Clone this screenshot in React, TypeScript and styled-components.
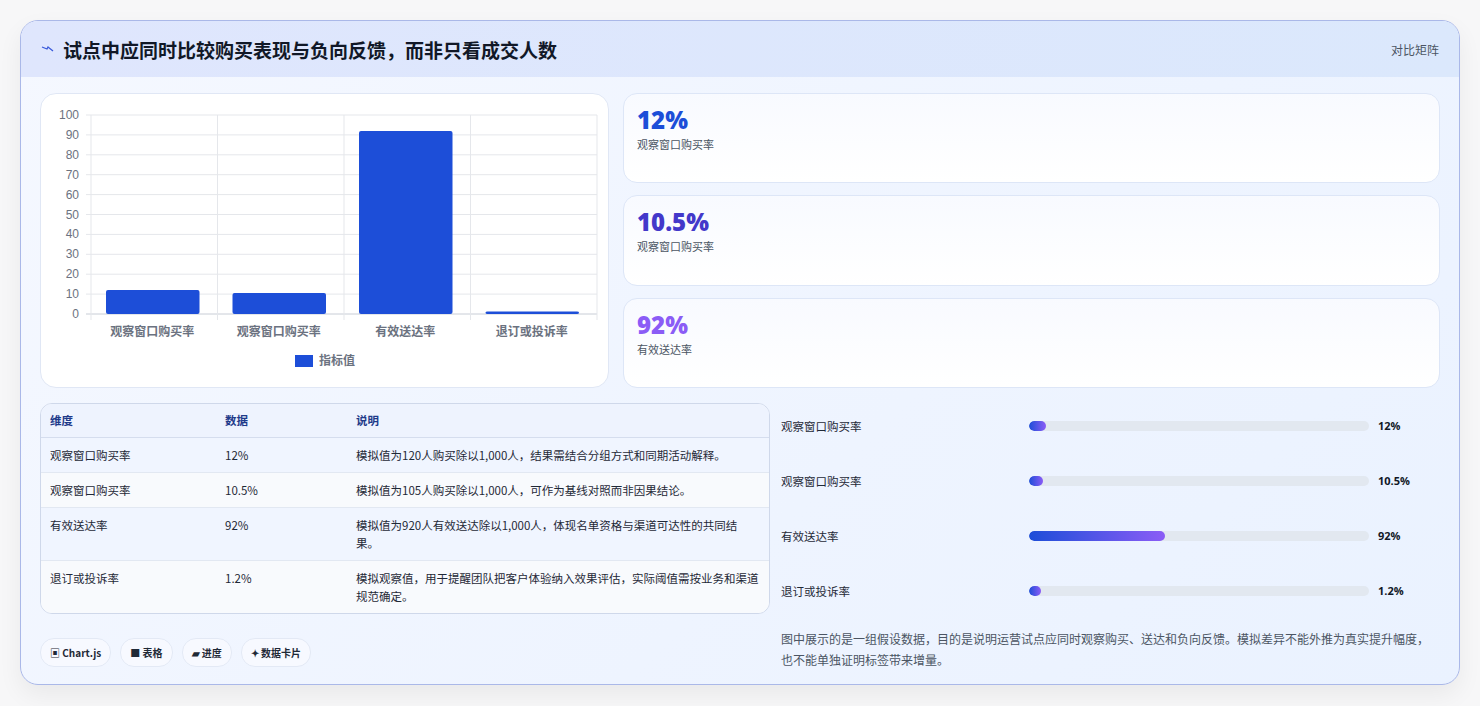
import React from "react";
import styled, { createGlobalStyle } from "styled-components";

const Global = createGlobalStyle`
  html, body { margin: 0; padding: 0; background: #f7f7f8; }
  body { font-family: "Noto Sans", "Noto Sans CJK SC", sans-serif; }
  * { box-sizing: border-box; }
`;

const Page = styled.div`
  padding: 20px;
  height: 706px;
`;
const Card = styled.div`
  width: 1440px;
  height: 665px;
  border: 1px solid #aab8e8;
  border-radius: 18px;
  background: linear-gradient(135deg, #f5f8ff 0%, #eef4ff 60%, #eaf2ff 100%);
  box-shadow: 0 10px 24px rgba(0,0,0,0.06);
  overflow: hidden;
  display: flex;
  flex-direction: column;
`;
const Header = styled.div`
  height: 56px;
  display: flex;
  align-items: center;
  justify-content: space-between;
  padding: 0 20px;
  background: linear-gradient(90deg, #dfe6fd, #dbe8fc);
`;
const Title = styled.h1`
  margin: 0;
  font-size: 19px;
  font-weight: 700;
  color: #111827;
  display: flex;
  align-items: center;
  gap: 8px;
  font-family: "Noto Sans CJK SC", sans-serif;
`;
const Tag = styled.span`
  font-size: 12px;
  color: #4b5563;
  font-family: "Noto Sans CJK SC", sans-serif;
`;
const Body = styled.div`
  padding: 16px 19px 0 19px;
  display: flex;
  flex-direction: column;
  gap: 15px;
`;
const Row = styled.div<{ $h?: number }>`
  display: flex;
  gap: ${p => (p.$h ? 14 : 11)}px;
  ${p => (p.$h ? `height: ${p.$h}px;` : "")}
`;
const ChartCard = styled.div`
  width: 569px;
  flex: none;
  background: #fff;
  border: 1px solid #e0e7f5;
  border-radius: 16px;
`;
const Stats = styled.div`
  flex: 1;
  display: flex;
  flex-direction: column;
  gap: 12px;
`;
const Stat = styled.div`
  flex: 1;
  background: linear-gradient(180deg, #f8faff, #ffffff);
  border: 1px solid #dde6f7;
  border-radius: 14px;
  padding: 11px 13px;
`;
const StatValue = styled.div<{ $c: string }>`
  font-size: 24px;
  font-weight: 800;
  line-height: 30px;
  color: ${p => p.$c};
  font-family: "Open Sans", "Noto Sans", sans-serif;
`;
const StatLabel = styled.div`
  font-size: 11px;
  color: #4b5563;
  margin-top: 1px;
  font-family: "Noto Sans CJK SC", sans-serif;
`;
const LeftBottom = styled.div`
  display: flex;
  flex-direction: column;
  width: 730px;
  flex: none;
`;
const TableWrap = styled.div`
  border: 1px solid #cfd8ea;
  border-radius: 12px;
  overflow: hidden;
  background: #f8faff;
`;
const Table = styled.table`
  width: 100%;
  border-collapse: collapse;
  font-size: 11.5px;
  font-family: "Noto Sans CJK SC", sans-serif;
  color: #1f2937;
  th { text-align: left; font-weight: 700; color: #1e3a8a; background: #eef3fe; padding: 8px 9px; height: 33px; border-bottom: 1px solid #d5ddee; }
  td { padding: 8px 9px; vertical-align: top; line-height: 18px; border-bottom: 1px solid #e2e8f2; }
  tr:nth-child(odd) td { background: #f0f5ff; }
  tr:nth-child(even) td { background: #f8fafd; }
  tr:last-child td { border-bottom: none; }
`;
const Chips = styled.div`
  display: flex;
  gap: 9px;
  margin-top: 24px;
`;
const Chip = styled.span`
  font-size: 10px;
  font-weight: 600;
  color: #1f2937;
  background: #f7f9ff;
  border: 1px solid #e3e9f5;
  border-radius: 14px;
  padding: 6px 9px;
  font-family: "Noto Sans CJK SC", sans-serif;
`;
const RightBottom = styled.div`
  flex: 1;
  display: flex;
  flex-direction: column;
`;
const BarRow = styled.div`
  display: grid;
  grid-template-columns: 248px 340px 1fr;
  align-items: center;
  height: 55px;
  font-family: "Noto Sans CJK SC", sans-serif;
  &:first-child { margin-top: -5px; }
`;
const BarLabel = styled.span`
  font-size: 11.5px;
  color: #1f2937;
`;
const Track = styled.div`
  height: 10px;
  background: #e2e8f0;
  border-radius: 5px;
  overflow: hidden;
`;
const Fill = styled.div`
  height: 100%;
  border-radius: 5px;
  background: linear-gradient(90deg, #1d4ed8, #8b5cf6);
`;
const BarVal = styled.span`
  font-size: 11px;
  font-weight: 700;
  color: #111827;
  padding-left: 9px;
  font-family: "Open Sans", sans-serif;
`;
const Note = styled.p`
  margin: 10px 0 0;
  font-size: 12px;
  line-height: 21px;
  color: #4b5563;
  font-family: "Noto Sans CJK SC", sans-serif;
`;

const cats = ["观察窗口购买率", "观察窗口购买率", "有效送达率", "退订或投诉率"];
const vals = [12, 10.5, 92, 1.2];

function Chart() {
  const x0 = 50, x1 = 556, yTop = 21, yBot = 220;
  const cw = (x1 - x0) / 4;
  const ticks = [0, 10, 20, 30, 40, 50, 60, 70, 80, 90, 100];
  const y = (v: number) => yBot - (v / 100) * (yBot - yTop);
  return (
    <svg width="569" height="295" style={{ display: "block" }} fontFamily="Liberation Sans, Noto Sans CJK SC, sans-serif">
      {ticks.map(t => (
        <g key={t}>
          <line x1={x0 - 5} x2={x1} y1={y(t)} y2={y(t)} stroke={t === 0 ? "#c8cdd6" : "#e5e7eb"} />
          <text x={x0 - 12} y={y(t) + 4} fontSize="12" fill="#6b7280" textAnchor="end">{t}</text>
        </g>
      ))}
      {[0, 1, 2, 3, 4].map(i => (
        <line key={i} x1={x0 + i * cw} x2={x0 + i * cw} y1={yTop} y2={yBot + 6} stroke="#e5e7eb" />
      ))}
      {vals.map((v, i) => (
        <rect key={i} x={x0 + i * cw + 15} width={cw - 33} y={y(v)} height={yBot - y(v)} rx="2" fill="#1d4ed8" />
      ))}
      {cats.map((c, i) => (
        <text key={i} x={x0 + i * cw + cw / 2 - 2} y={242} fontSize="12" fontWeight="600" fill="#6b7280" textAnchor="middle">{c}</text>
      ))}
      <rect x={254} y={261} width={18} height={12} fill="#1d4ed8" />
      <text x={278} y={271} fontSize="12" fontWeight="600" fill="#6b7280">指标值</text>
    </svg>
  );
}

const rows = [
  ["观察窗口购买率", "12%", "模拟值为120人购买除以1,000人，结果需结合分组方式和同期活动解释。"],
  ["观察窗口购买率", "10.5%", "模拟值为105人购买除以1,000人，可作为基线对照而非因果结论。"],
  ["有效送达率", "92%", "模拟值为920人有效送达除以1,000人，体现名单资格与渠道可达性的共同结果。"],
  ["退订或投诉率", "1.2%", "模拟观察值，用于提醒团队把客户体验纳入效果评估，实际阈值需按业务和渠道规范确定。"],
];
const bars: [string, string, number][] = [
  ["观察窗口购买率", "12%", 17],
  ["观察窗口购买率", "10.5%", 14],
  ["有效送达率", "92%", 136],
  ["退订或投诉率", "1.2%", 12],
];

export default function App() {
  return (
    <Page>
      <Global />
      <Card>
        <Header>
          <Title>
            <svg width="14" height="10" viewBox="0 0 14 10"><path d="M1 3 L6 5 L7 3 L12 7" stroke="#3b5bdb" strokeWidth="1.3" fill="none" /></svg>
            试点中应同时比较购买表现与负向反馈，而非只看成交人数
          </Title>
          <Tag>对比矩阵</Tag>
        </Header>
        <Body>
          <Row $h={295}>
            <ChartCard><Chart /></ChartCard>
            <Stats>
              <Stat><StatValue $c="#1d4ed8">12%</StatValue><StatLabel>观察窗口购买率</StatLabel></Stat>
              <Stat><StatValue $c="#4338ca">10.5%</StatValue><StatLabel>观察窗口购买率</StatLabel></Stat>
              <Stat><StatValue $c="#8b5cf6">92%</StatValue><StatLabel>有效送达率</StatLabel></Stat>
            </Stats>
          </Row>
          <Row>
            <LeftBottom>
              <TableWrap>
                <Table>
                  <colgroup><col style={{ width: 175 }} /><col style={{ width: 131 }} /><col /></colgroup>
                  <thead><tr><th>维度</th><th>数据</th><th>说明</th></tr></thead>
                  <tbody>
                    {rows.map((r, i) => (
                      <tr key={i}><td>{r[0]}</td><td>{r[1]}</td><td>{r[2]}</td></tr>
                    ))}
                  </tbody>
                </Table>
              </TableWrap>
              <Chips>
                <Chip>▣ Chart.js</Chip>
                <Chip>■ 表格</Chip>
                <Chip>▰ 进度</Chip>
                <Chip>✦ 数据卡片</Chip>
              </Chips>
            </LeftBottom>
            <RightBottom>
              {bars.map((b, i) => (
                <BarRow key={i}>
                  <BarLabel>{b[0]}</BarLabel>
                  <Track><Fill style={{ width: b[2] }} /></Track>
                  <BarVal>{b[1]}</BarVal>
                </BarRow>
              ))}
              <Note>图中展示的是一组假设数据，目的是说明运营试点应同时观察购买、送达和负向反馈。模拟差异不能外推为真实提升幅度，也不能单独证明标签带来增量。</Note>
            </RightBottom>
          </Row>
        </Body>
      </Card>
    </Page>
  );
}
